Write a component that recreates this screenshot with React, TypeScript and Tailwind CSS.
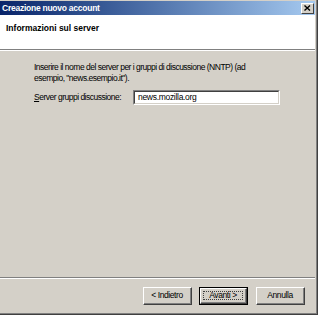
import React from "react";

const FONT = { fontFamily: '"Liberation Sans", Arial, sans-serif' };

function Btn({ children, def }: { children: React.ReactNode; def?: boolean }) {
  if (def) {
    return (
      <div className="w-[49px] h-[18px] border border-[#000000]">
        <div className="w-full h-full border-t border-l border-white border-b border-r border-b-[#404040] border-r-[#404040] bg-[#d4d0c8]">
          <div className="w-full h-full border-b border-r border-[#808080] p-[2px]">
            <div className="w-full h-full border border-dotted border-[#404040] flex items-center justify-center text-[8.5px] tracking-[-0.4px] text-black leading-none">
              {children}
            </div>
          </div>
        </div>
      </div>
    );
  }
  return (
    <div className="w-[49px] h-[18px] border-t border-l border-white border-b border-r border-b-[#404040] border-r-[#404040] bg-[#d4d0c8]">
      <div className="w-full h-full border-b border-r border-[#808080] flex items-center justify-center text-[8.5px] tracking-[-0.4px] text-black leading-none">
        {children}
      </div>
    </div>
  );
}

export default function App() {
  return (
    <div className="w-[318px] h-[315px] bg-[#d4d0c8] border-r border-b border-[#404040]" style={FONT}>
      <div className="w-full h-full border-r border-b border-[#808080] pr-[1px] pb-[1px] pt-[1px] flex flex-col">
        <div className="h-[14px] flex items-center justify-between pl-[2px] pr-[1px] bg-gradient-to-r from-[#0a246a] to-[#a6caf0] shrink-0">
          <span className="text-white font-bold text-[8.5px] tracking-[-0.25px] leading-none">Creazione nuovo account</span>
          <div className="w-[13px] h-[11px] bg-[#d4d0c8] border-t border-l border-white border-b border-r border-b-[#404040] border-r-[#404040] flex items-center justify-center">
            <svg width="7" height="6" viewBox="0 0 7 6">
              <path d="M0.5 0.5 L6 5.5 M6 0.5 L0.5 5.5" stroke="#000" strokeWidth="1.4" />
            </svg>
          </div>
        </div>
        <div className="h-[34px] bg-white flex items-start pl-[6px] pt-[9px] shrink-0">
          <span className="font-bold text-[8.5px] text-black leading-none">Informazioni sul server</span>
        </div>
        <div className="h-px bg-[#808080] shrink-0" />
        <div className="h-px bg-white shrink-0" />
        <div className="flex-1 flex flex-col pl-[34px] pt-[11px] text-[8.5px] tracking-[-0.5px] text-black">
          <p className="leading-[11px] w-[225px]">
            Inserire il nome del server per i gruppi di discussione (NNTP) (ad esempio, "news.esempio.it").
          </p>
          <div className="flex items-center mt-[6px]">
            <span className="w-[99px] leading-none whitespace-nowrap">
              <span className="underline">S</span>erver gruppi discussione:
            </span>
            <div className="w-[147px] h-[15px] border-t border-l border-[#808080] border-b border-r border-b-white border-r-white">
              <div className="w-full h-full border-t border-l border-[#404040] border-b border-r border-b-[#d4d0c8] border-r-[#d4d0c8] bg-white flex items-center pl-[3px] leading-none tracking-[-0.3px]">
                news.mozilla.org
              </div>
            </div>
          </div>
        </div>
        <div className="h-px bg-[#808080] shrink-0" />
        <div className="h-px bg-white shrink-0" />
        <div className="h-[33px] flex items-start justify-end pt-[8px] pr-[10px] shrink-0">
          <Btn>&lt; Indietro</Btn>
          <div className="w-[7px]" />
          <Btn def>Avanti &gt;</Btn>
          <div className="w-[8px]" />
          <Btn>Annulla</Btn>
        </div>
      </div>
    </div>
  );
}
